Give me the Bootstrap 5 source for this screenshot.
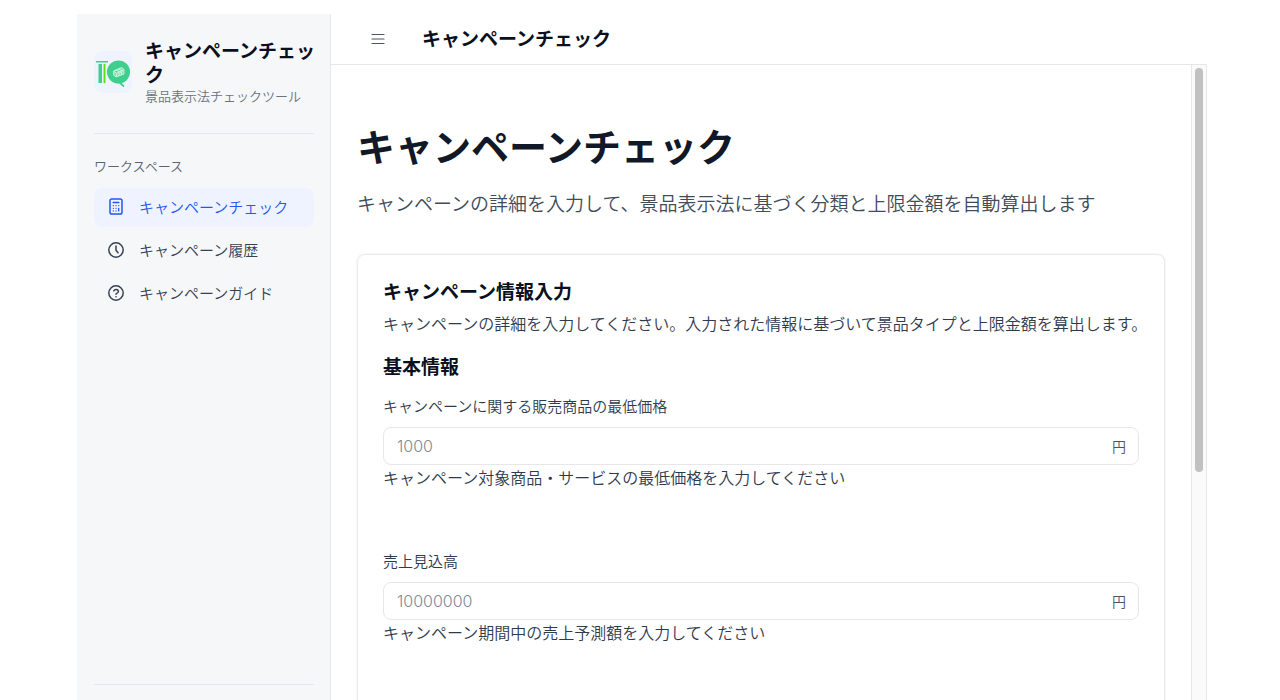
<!DOCTYPE html>
<html lang="ja">
<head>
<meta charset="utf-8">
<meta name="viewport" content="width=device-width, initial-scale=1">
<title>キャンペーンチェック</title>
<link href="https://cdn.jsdelivr.net/npm/bootstrap@5.3.0/dist/css/bootstrap.min.css" rel="stylesheet">
<style>
  body { font-family: "Noto Sans CJK JP", sans-serif; font-size: 16px; font-weight: 350; line-height: 24px; color: #2f3a4c; background: #fff; }
  .app-shell { height: 100vh; padding: 14px 73px 0 77px; }
  .side-panel { width: 254px; padding: 24px 16px 15px 17px; background: #f5f7f9; border-right: 1px solid #e5e7eb; }
  .brand-row { gap: 13px; padding-bottom: 27px; margin-right: -8px; }
  .brand-mark { width: 38px; height: 42px; border-radius: 8px; background: #eff3ff; }
  .title-text { font-size: 19px; line-height: 24px; font-weight: 700; color: #0b1020; margin: 0; }
  .brand-sub { font-size: 13px; line-height: 20px; color: #6b7280; }
  .rule { border-top: 1px solid #e5e7eb; }
  .group-name { font-size: 13px; line-height: 20px; color: #5b6472; margin: 22px 0 12px; }
  .side-link { height: 39px; padding: 0 14px 2px; gap: 14px; border-radius: 8px; font-size: 15px; color: #374151; }
  .side-link.active, .side-link.active svg { color: #2057f5; }
  .side-link.active { background: #eff3ff; }
  .top-bar { height: 51px; padding: 0 0 2px 35px; gap: 32px; border-bottom: 1px solid #e5e7eb; }
  .menu-btn { width: 24px; height: 24px; color: #4b5563; }
  .page-area { padding: 56px 26px 0; overflow: hidden; }
  .page-title { font-size: 38px; line-height: 48px; font-weight: 700; color: #111827; margin: 0 0 20px; }
  .page-lead { font-size: 19px; line-height: 28px; color: #414b5c; margin: 0 0 37px; }
  .form-card { padding: 24px 25px 280px; border: 1px solid #ebebed; border-radius: 8px; box-shadow: 0 0 2px rgba(0, 0, 0, .12); }
  .section-title { line-height: 28px; margin: 17px 0 16px; }
  .field-name { font-size: 15px; line-height: 20px; margin-bottom: 11px; }
  .field-group + .field-group { margin-top: 62px; }
  .money { height: 38px; border: 1px solid #e5e7eb; border-radius: 8px; padding: 0 12px 0 13px; }
  .money input { font-family: Inter, "Noto Sans CJK JP", sans-serif; font-size: 16px; font-weight: 300; color: #374151; }
  .money input:focus { outline: none; }
  .money:focus-within { border-color: #2c63f5; }
  .money input::placeholder { color: #808998; }
  .unit { font-size: 14px; color: #4b5563; }
  .scroll-track { width: 16px; padding: 3px 3px 0; background: #fafafa; border: solid #e8e8e8; border-width: 0 1px; }
  .scroll-thumb { height: 64%; border-radius: 5px; background: #c1c1c1; }
</style>
</head>
<body>
<div class="app-shell d-flex overflow-hidden">
  <aside class="side-panel d-flex flex-column flex-shrink-0">
    <div class="brand-row d-flex align-items-center">
      <div class="brand-mark flex-shrink-0 d-flex align-items-center justify-content-center">
        <svg width="38" height="42" viewBox="0 0 38 42" aria-hidden="true">
          <path d="M2 10h12v1.500H2zM4.500 13H8v19H4.500z" fill="#3fce8b"/>
          <path d="M9.500 13h2v19h-2z" fill="#62dc18"/>
          <circle cx="24.500" cy="21" r="11.500" fill="#3fce8b"/>
          <path d="M25 31l5 4.500" stroke="#3fce8b" stroke-width="1.700" fill="none"/>
          <path d="M19.500 20l8-3.500 2.500 2v4.500l-8 3-2.500-2zM20 20.500l2.500 1.500 7-3M22.500 22.500v3M21 19l6 2.500M24 18l5 2M25 21.500v3.500M27.500 20.500v3.500" fill="#86e2b8" stroke="#d8f7e8" stroke-width=".8"/>
        </svg>
      </div>
      <div>
        <div class="title-text">キャンペーンチェック</div>
        <div class="brand-sub">景品表示法チェックツール</div>
      </div>
    </div>
    <div class="rule"></div>
    <div class="group-name">ワークスペース</div>
    <nav class="nav flex-column gap-1">
      <a href="#" class="side-link active d-flex align-items-center text-decoration-none" aria-current="page">
        <svg width="17" height="17" viewBox="0 0 17 17" fill="none" stroke="currentColor" stroke-width="1.500" stroke-linecap="round" aria-hidden="true"><rect x="2" y="1" width="12" height="15" rx="1.800"/><path d="M5.200 4.600h5.600"/><path d="M5.300 7.700h.1M8 7.700h.1M10.700 7.700h.1M5.300 10.300h.1M8 10.300h.1M5.300 12.900h.1M8 12.900h.1M10.700 10.300v2.600" stroke-width="1.300"/></svg>
        キャンペーンチェック
      </a>
      <a href="#" class="side-link d-flex align-items-center text-decoration-none">
        <svg width="17" height="17" viewBox="0 0 17 17" fill="none" stroke="currentColor" stroke-width="1.500" stroke-linecap="round" stroke-linejoin="round" aria-hidden="true"><circle cx="8" cy="9" r="7.200"/><path d="M8 5v4.300l2 2.500"/></svg>
        キャンペーン履歴
      </a>
      <a href="#" class="side-link d-flex align-items-center text-decoration-none">
        <svg width="17" height="17" viewBox="0 0 17 17" fill="none" stroke="currentColor" stroke-width="1.500" stroke-linecap="round" stroke-linejoin="round" aria-hidden="true"><circle cx="8" cy="9" r="7.200"/><path d="M5.800 6.900c.9-1.700 3.600-1.700 4.400-.3.800 1.500-.6 2.300-1.600 2.800-.4.200-.6.500-.6.900"/><path d="M8 12.700h.1"/></svg>
        キャンペーンガイド
      </a>
    </nav>
    <div class="rule mt-auto"></div>
  </aside>

  <div class="flex-grow-1 d-flex flex-column overflow-hidden">
    <header class="top-bar d-flex align-items-center flex-shrink-0">
      <button type="button" class="menu-btn btn p-0 border-0 d-flex align-items-center justify-content-center" aria-label="メニュー">
        <svg width="14" height="14" viewBox="0 0 14 14" stroke="currentColor" stroke-width="1.200" stroke-linecap="round" aria-hidden="true"><path d="M1 3.500h12M1 8h12M1 12.500h12"/></svg>
      </button>
      <div class="title-text">キャンペーンチェック</div>
    </header>
    <div class="flex-grow-1 d-flex overflow-hidden">
      <main class="page-area flex-grow-1">
        <h1 class="page-title">キャンペーンチェック</h1>
        <p class="page-lead text-nowrap">キャンペーンの詳細を入力して、景品表示法に基づく分類と上限金額を自動算出します</p>
        <form class="form-card">
          <h2 class="title-text">キャンペーン情報入力</h2>
          <p class="mt-2 mb-0 text-nowrap">キャンペーンの詳細を入力してください。入力された情報に基づいて景品タイプと上限金額を算出します。</p>
          <h3 class="title-text section-title">基本情報</h3>
          <div class="field-group">
            <label class="field-name d-block" for="price">キャンペーンに関する販売商品の最低価格</label>
            <div class="money d-flex align-items-center">
              <input id="price" type="text" inputmode="numeric" class="flex-grow-1 border-0 bg-transparent p-0" placeholder="1000">
              <span class="unit">円</span>
            </div>
            <div>キャンペーン対象商品・サービスの最低価格を入力してください</div>
          </div>
          <div class="field-group">
            <label class="field-name d-block" for="sales">売上見込高</label>
            <div class="money d-flex align-items-center">
              <input id="sales" type="text" inputmode="numeric" class="flex-grow-1 border-0 bg-transparent p-0" placeholder="10000000">
              <span class="unit">円</span>
            </div>
            <div>キャンペーン期間中の売上予測額を入力してください</div>
          </div>
        </form>
      </main>
      <div class="scroll-track flex-shrink-0"><div class="scroll-thumb"></div></div>
    </div>
  </div>
</div>
<script src="https://cdn.jsdelivr.net/npm/bootstrap@5.3.0/dist/js/bootstrap.bundle.min.js"></script>
</body>
</html>
